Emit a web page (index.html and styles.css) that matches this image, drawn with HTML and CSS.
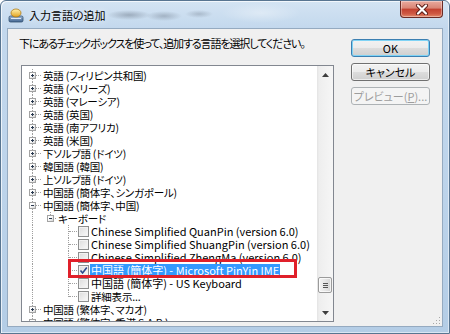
FILE: index.html
```html
<!DOCTYPE html>
<html lang="ja">
<head>
    <meta charset="UTF-8">
    <title>入力言語の追加</title>
    <link rel="stylesheet" href="styles.css">
</head>
<body>
    <div class="window">
        <div class="titlebar">
            <svg class="app-icon" width="16" height="16" viewBox="0 0 16 16">
                <defs>
                    <linearGradient id="head" x1="0" y1="0" x2="0" y2="1">
                        <stop offset="0" stop-color="#fff3b0"/>
                        <stop offset="1" stop-color="#e2a21e"/>
                    </linearGradient>
                    <linearGradient id="base" x1="0" y1="0" x2="0" y2="1">
                        <stop offset="0" stop-color="#9fb9d6"/>
                        <stop offset="1" stop-color="#3f6390"/>
                    </linearGradient>
                </defs>
                <rect x="1" y="9" width="14" height="6" rx="1.5" fill="url(#base)" stroke="#34506f" stroke-width="0.8"/>
                <rect x="3" y="11" width="10" height="1" fill="#dfe9f4"/>
                <ellipse cx="8" cy="6" rx="5" ry="4" fill="url(#head)" stroke="#b07a14" stroke-width="0.8"/>
            </svg>
            <span class="title">入力言語の追加</span>
            <div class="close">
                <svg width="14" height="11" viewBox="0 0 14 11">
                    <path d="M3 1.5 L11 9.5 M11 1.5 L3 9.5" stroke="#5a1c16" stroke-width="4" stroke-linecap="round"/>
                    <path d="M3 1.5 L11 9.5 M11 1.5 L3 9.5" stroke="#fff" stroke-width="2.2" stroke-linecap="round"/>
                </svg>
            </div>
        </div>

        <div class="client">
            <div class="main">
                <p class="hint">下にあるチェックボックスを使って、追加する言語を選択してください。</p>
                <div class="tree-box">
                    <div class="tree">
                        <div class="row"><span class="cell tee"><span class="box plus"></span></span><span class="label ja">英語 (フィリピン共和国)</span></div>
                        <div class="row"><span class="cell tee"><span class="box plus"></span></span><span class="label ja">英語 (ベリーズ)</span></div>
                        <div class="row"><span class="cell tee"><span class="box plus"></span></span><span class="label ja">英語 (マレーシア)</span></div>
                        <div class="row"><span class="cell tee"><span class="box plus"></span></span><span class="label ja">英語 (英国)</span></div>
                        <div class="row"><span class="cell tee"><span class="box plus"></span></span><span class="label ja">英語 (南アフリカ)</span></div>
                        <div class="row"><span class="cell tee"><span class="box plus"></span></span><span class="label ja">英語 (米国)</span></div>
                        <div class="row"><span class="cell tee"><span class="box plus"></span></span><span class="label ja">下ソルブ語 (ドイツ)</span></div>
                        <div class="row"><span class="cell tee"><span class="box plus"></span></span><span class="label ja">韓国語 (韓国)</span></div>
                        <div class="row"><span class="cell tee"><span class="box plus"></span></span><span class="label ja">上ソルブ語 (ドイツ)</span></div>
                        <div class="row"><span class="cell tee"><span class="box plus"></span></span><span class="label ja">中国語 (簡体字、シンガポール)</span></div>
                        <div class="row"><span class="cell tee"><span class="box minus"></span></span><span class="label ja">中国語 (簡体字、中国)</span></div>
                        <div class="row"><span class="cell v"></span><span class="cell elbow short"><span class="box minus"></span></span><span class="label ja">キーボード</span></div>
                        <div class="row"><span class="cell v"></span><span class="cell"></span><span class="cell tee"></span><span class="chk"></span><span class="label">Chinese Simplified QuanPin (version 6.0)</span></div>
                        <div class="row"><span class="cell v"></span><span class="cell"></span><span class="cell tee"></span><span class="chk"></span><span class="label">Chinese Simplified ShuangPin (version 6.0)</span></div>
                        <div class="row"><span class="cell v"></span><span class="cell"></span><span class="cell tee"></span><span class="chk"></span><span class="label">Chinese Simplified ZhengMa (version 6.0)</span></div>
                        <div class="row"><span class="cell v"></span><span class="cell"></span><span class="cell tee"></span><span class="chk checked"><svg width="9" height="9" viewBox="0 0 9 9"><path d="M1.5 4.5 L3.6 7 L7.8 1.6" fill="none" stroke="#2c4a8c" stroke-width="1.6"/></svg></span><span class="label selected">中国語 (簡体字) - Microsoft PinYin IME</span></div>
                        <div class="row"><span class="cell v"></span><span class="cell"></span><span class="cell tee"></span><span class="chk"></span><span class="label">中国語 (簡体字) - US Keyboard</span></div>
                        <div class="row"><span class="cell v"></span><span class="cell"></span><span class="cell elbow"></span><span class="chk"></span><span class="label ja">詳細表示...</span></div>
                        <div class="row"><span class="cell tee"><span class="box plus"></span></span><span class="label ja">中国語 (繁体字、マカオ)</span></div>
                        <div class="row"><span class="cell tee"><span class="box plus"></span></span><span class="label ja">中国語 (繁体字、香港 S.A.R.)</span></div>
                    </div>
                    <div class="scrollbar">
                        <div class="arrow">
                            <svg width="7" height="4" viewBox="0 0 7 4"><path d="M0 4 L3.5 0 L7 4 Z" fill="#3d3d3d"/></svg>
                        </div>
                        <div class="track">
                            <div class="thumb"><span></span><span></span><span></span></div>
                        </div>
                        <div class="arrow">
                            <svg width="7" height="4" viewBox="0 0 7 4"><path d="M0 0 L7 0 L3.5 4 Z" fill="#3d3d3d"/></svg>
                        </div>
                    </div>
                    <div class="mark"></div>
                </div>
            </div>

            <div class="buttons">
                <button class="btn default">OK</button>
                <button class="btn">キャンセル</button>
                <button class="btn" disabled>プレビュー(<u>P</u>)...</button>
            </div>

            <svg class="grip" width="10" height="10" viewBox="0 0 10 10">
                <rect x="8" y="2" width="1" height="1" fill="#a8a8a8"/>
                <rect x="5" y="5" width="1" height="1" fill="#a8a8a8"/>
                <rect x="8" y="5" width="1" height="1" fill="#a8a8a8"/>
                <rect x="2" y="8" width="1" height="1" fill="#a8a8a8"/>
                <rect x="5" y="8" width="1" height="1" fill="#a8a8a8"/>
                <rect x="8" y="8" width="1" height="1" fill="#a8a8a8"/>
            </svg>
        </div>
    </div>
</body>
</html>
```

FILE: styles.css
```css
* {
    box-sizing: border-box;
}

body {
    margin: 0;
    width: 450px;
    height: 334px;
    overflow: hidden;
    background: #ffffff;
    font-family: "Noto Sans CJK JP", "Noto Sans", sans-serif;
    font-feature-settings: "palt";
    color: #000;
}

/* Aero window frame */
.window {
    width: 450px;
    height: 334px;
    display: flex;
    flex-direction: column;
    border: 1px solid #587591;
    border-radius: 6px 6px 0 0;
    background: linear-gradient(to bottom, #d4e4f3 0, #c3d8ed 27px, #bcd3ea 60%, #b4cde6 100%);
    box-shadow: inset 1px 1px 0 rgba(255, 255, 255, 0.7), inset -1px -1px 0 rgba(255, 255, 255, 0.5);
}

.titlebar {
    height: 27px;
    flex: none;
    display: flex;
    align-items: center;
    padding-left: 7px;
    background:
        radial-gradient(ellipse 22px 5px at 128px 14px, rgba(70, 80, 95, 0.35), transparent),
        radial-gradient(ellipse 18px 5px at 163px 15px, rgba(70, 80, 95, 0.3), transparent),
        radial-gradient(ellipse 14px 4px at 198px 13px, rgba(70, 80, 95, 0.25), transparent),
        radial-gradient(ellipse 40px 10px at 260px 12px, rgba(255, 255, 255, 0.35), transparent);
}

.app-icon {
    flex: none;
}

.title {
    margin-left: 5px;
    font-size: 11px;
    line-height: 16px;
    text-shadow: 0 0 6px rgba(255, 255, 255, 0.9);
}

.close {
    margin-left: auto;
    margin-right: 6px;
    align-self: flex-start;
    width: 43px;
    height: 17px;
    display: flex;
    align-items: center;
    justify-content: center;
    border: 1px solid #6a2b25;
    border-top: none;
    border-radius: 0 0 4px 4px;
    background: linear-gradient(to bottom, #e9aa9e 0%, #d98474 45%, #c2402f 50%, #cf5a44 80%, #e38a6c 100%);
    box-shadow: inset 0 0 0 1px rgba(255, 255, 255, 0.35);
}

/* client area */
.client {
    flex: 1;
    min-height: 0;
    margin: 0 6px 6px;
    position: relative;
    border: 1px solid #95aac0;
    background: #f0f0f0;
    display: grid;
    grid-template-columns: 315px 79px;
    grid-template-rows: minmax(0, 1fr);
    column-gap: 17px;
    padding: 7px 12px 4px 11px;
}

.main {
    display: flex;
    flex-direction: column;
    min-height: 0;
}

.hint {
    margin: 0;
    font-size: 11px;
    line-height: 14px;
    letter-spacing: -1.1px;
    white-space: nowrap;
}

.tree-box {
    flex: 1;
    min-height: 0;
    margin: 15px 0 0 2px;
    border: 1px solid #828790;
    background: #ffffff;
    display: flex;
    position: relative;
    overflow: hidden;
}

.tree {
    flex: 1;
    overflow: hidden;
    padding: 3px 0 0 1px;
    font-size: 11px;
}

.row {
    height: 13px;
    display: flex;
    align-items: center;
    white-space: nowrap;
}

.cell {
    width: 18px;
    height: 13px;
    flex: none;
    position: relative;
}

.cell.short {
    width: 15px;
}

.cell.v::before,
.cell.tee::before,
.cell.elbow::before {
    content: '';
    position: absolute;
    left: 9px;
    top: 0;
    height: 13px;
    border-left: 1px dotted #a0a0a0;
}

.cell.elbow::before {
    height: 7px;
}

.cell.tee::after,
.cell.elbow::after {
    content: '';
    position: absolute;
    left: 10px;
    right: 0;
    top: 6px;
    border-top: 1px dotted #a0a0a0;
}

.box {
    position: absolute;
    left: 6px;
    top: 3px;
    width: 7px;
    height: 7px;
    z-index: 1;
    border: 1px solid #a3a3a3;
    background: linear-gradient(135deg, #ffffff 35%, #d4d4d4 100%);
}

.box::before,
.box.plus::after {
    content: '';
    position: absolute;
    background: #2a3a50;
}

.box::before {
    left: 1px;
    top: 2px;
    width: 3px;
    height: 1px;
}

.box.plus::after {
    left: 2px;
    top: 1px;
    width: 1px;
    height: 3px;
}

.label {
    margin-left: 2px;
    line-height: 13px;
}

.label.ja {
    font-size: 10.5px;
    letter-spacing: -0.2px;
}

.label.selected {
    background: #3399ff;
    color: #ffffff;
    padding: 0 1px;
    margin-left: 1px;
}

.chk {
    width: 11px;
    height: 11px;
    flex: none;
    margin-left: 1px;
    border: 1px solid #8e8f8f;
    background: linear-gradient(135deg, #dcdcdc 0%, #fafafa 100%);
    box-shadow: inset 0 0 0 1px #f2f2f2;
    display: flex;
    align-items: center;
    justify-content: center;
}

/* annotation box round the selected keyboard */
.mark {
    position: absolute;
    left: 46px;
    top: 193px;
    width: 229px;
    height: 19px;
    border: 3px solid #e0202a;
}

/* vista scrollbar */
.scrollbar {
    width: 16px;
    flex: none;
    display: flex;
    flex-direction: column;
    background: linear-gradient(to right, #e3e3e3 0, #eeeeee 2px, #f6f6f6 100%);
}

.arrow {
    height: 17px;
    flex: none;
    display: flex;
    align-items: center;
    justify-content: center;
}

.track {
    flex: 1;
    display: flex;
    flex-direction: column;
    justify-content: flex-end;
    padding: 0 1px 11px;
}

.thumb {
    height: 16px;
    border: 1px solid #9b9b9b;
    border-radius: 2px;
    background: linear-gradient(to right, #f4f4f4 0%, #e6e6e6 50%, #d5d5d5 100%);
    box-shadow: inset 0 0 0 1px rgba(255, 255, 255, 0.7);
    display: flex;
    flex-direction: column;
    align-items: center;
    justify-content: center;
    gap: 1px;
}

.thumb span {
    width: 5px;
    height: 1px;
    background: #555;
}

/* buttons */
.buttons {
    display: flex;
    flex-direction: column;
    gap: 6px;
    margin-top: 3px;
}

.btn {
    height: 18px;
    padding: 0;
    font-family: inherit;
    font-feature-settings: "palt";
    font-size: 11px;
    line-height: 14px;
    color: #000;
    border: 1px solid #707070;
    border-radius: 3px;
    background: linear-gradient(to bottom, #f2f2f2 0%, #ebebeb 50%, #dddddd 50%, #cfcfcf 100%);
    box-shadow: inset 0 0 0 1px rgba(255, 255, 255, 0.6);
}

.btn.default {
    border-color: #3c7fb1;
    box-shadow: inset 0 0 0 1px #7fd3f5;
}

.btn:disabled {
    border-color: #adb2b5;
    background: #f4f4f4;
    color: #9d9d9d;
    box-shadow: none;
}

.btn u {
    text-decoration: underline;
}

.grip {
    position: absolute;
    right: 1px;
    bottom: 1px;
}
```
